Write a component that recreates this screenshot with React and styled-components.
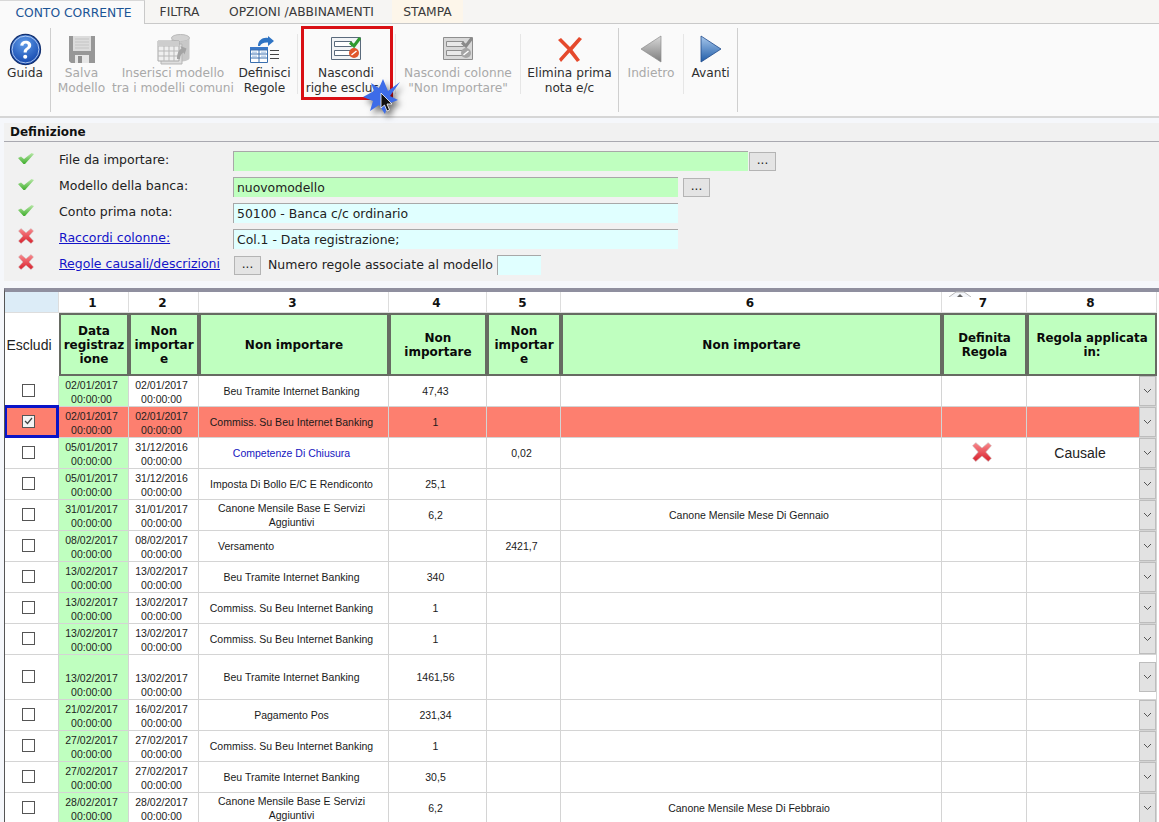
import React from 'react';
import styled, { createGlobalStyle } from 'styled-components';

const GlobalStyle = createGlobalStyle`
  html, body {
    margin: 0;
    padding: 0;
    height: 822px;
    overflow: hidden;
    background: #f5f7fb;
    font-family: "DejaVu Sans", Verdana, sans-serif;
  }
`;

const Page = styled.div`
  position: relative;
  width: 1159px;
  height: 822px;
  overflow: hidden;
`;

const TabBar = styled.div`
  display: flex;
  height: 23px;
  background: #f6f5f3;
  border-bottom: 1px solid #c9c9c9;
`;

const Tab = styled.div`
  box-sizing: border-box;
  width: ${p => p.$w}px;
  height: ${p => (p.$active ? 24 : 23)}px;
  padding-left: ${p => p.$pl || 0}px;
  padding-right: ${p => p.$pr || 0}px;
  display: flex;
  align-items: center;
  justify-content: center;
  font-size: 12.3px;
  white-space: nowrap;
  color: ${p => (p.$active ? '#1c5596' : '#3a3a3a')};
  background: ${p => (p.$active ? '#fafafa' : p.$warm ? '#fdf6ea' : 'transparent')};
  border-right: ${p => (p.$active ? '1px solid #c9c9c9' : 'none')};
  border-top: ${p => (p.$active ? '1px solid #d8d8d8' : 'none')};
`;

const Ribbon = styled.div`
  display: flex;
  height: 92px;
  background: #fafafa;
  border-bottom: 2px solid #d6d6d6;
`;

const Tool = styled.div`
  box-sizing: border-box;
  width: ${p => p.$w}px;
  padding-top: 8px;
  display: flex;
  flex-direction: column;
  align-items: center;
  font-size: 12.2px;
  line-height: 15px;
  text-align: center;
  white-space: nowrap;
  color: ${p => (p.$off ? '#a9a9a9' : '#2e2e2e')};
`;

const HotTool = styled(Tool)`
  height: 74px;
  margin-top: 2px;
  padding: 3px 2px 0 0;
  border: 3px solid #d90f14;
  justify-content: flex-start;
`;

const ToolIcon = styled.div`
  height: 34px;
  display: flex;
  align-items: center;
  justify-content: center;
`;

const TallSep = styled.div`
  width: 1px;
  height: 84px;
  margin-top: 4px;
  background: #cfcfcf;
`;

const ShortSep = styled.div`
  width: 1px;
  height: 60px;
  margin-top: 10px;
  background: #e6e6e6;
`;

const Spacer = styled.div`
  width: ${p => p.$w}px;
`;

const Panel = styled.section`
  margin: 5px 0 0 4px;
  height: 158px;
  background: #f1f1f1;
  width: 1155px;
`;

const PanelTitle = styled.h3`
  margin: 0;
  height: 19px;
  padding: 2px 0 0 6px;
  box-sizing: border-box;
  font-size: 12px;
  line-height: 15px;
  font-weight: bold;
  color: #111;
  border-bottom: 1px solid #a9a9b0;
`;

const FormRows = styled.div`
  display: flex;
  flex-direction: column;
  padding-top: 6px;
`;

const FormRow = styled.div`
  display: flex;
  align-items: center;
  height: 26px;
`;

const StatusIcon = styled.div`
  width: 55px;
  height: 26px;
  padding: 0 0 6px 14px;
  box-sizing: border-box;
  display: flex;
  align-items: center;
`;

const Label = styled.div`
  width: 174px;
  font-size: 12.5px;
  color: #222;
  margin-top: -4px;
`;

const FormLink = styled.a`
  font-size: 12.5px;
  color: #1414c8;
  text-decoration: underline;
  white-space: nowrap;
`;

const Field = styled.div`
  box-sizing: border-box;
  width: ${p => p.$w}px;
  height: 20px;
  margin-left: ${p => p.$ml || 0}px;
  padding-left: 3px;
  font-size: 12.4px;
  line-height: 20px;
  color: #222;
  background: ${p => (p.$green ? '#bfffbf' : '#e0ffff')};
  border-top: 1px solid #a8a8a8;
  border-left: 1px solid #a8a8a8;
`;

const DotsButton = styled.div`
  box-sizing: border-box;
  width: 27px;
  height: 19px;
  margin-left: ${p => p.$ml}px;
  background: #e4e4e4;
  border: 1px solid #b4b4b4;
  font-size: 12px;
  line-height: 15px;
  text-align: center;
  color: #222;
`;

const CountText = styled.span`
  margin: -2px 0 0 7px;
  font-size: 12.5px;
  color: #222;
  white-space: nowrap;
`;

const Splitter = styled.div`
  position: absolute;
  left: 949px;
  top: 282px;
  width: 22px;
  height: 6px;
`;

const Grid = styled.div`
  margin: 7px 0 0 4px;
  width: 1155px;
  height: 535px;
  overflow: hidden;
  border-top: 4px solid #8f8f9f;
  border-left: 1px solid #555;
  box-sizing: border-box;
  background: #fff;
`;

const Table = styled.table`
  table-layout: fixed;
  width: 1152px;
  border-collapse: separate;
  border-spacing: 0;
  font-family: "Liberation Sans", Arial, sans-serif;
`;

const NumCell = styled.th`
  height: 18px;
  padding: 2px 2px 0 0;
  box-sizing: content-box;
  font-family: "DejaVu Sans", sans-serif;
  font-size: 12px;
  line-height: 14px;
  font-weight: bold;
  color: #111;
  background: ${p => (p.$corner ? '#dcecf7' : '#fff')};
  border-right: 1px solid #ddd;
  border-bottom: 1px solid #ddd;
`;

const HeadCell = styled.th`
  box-sizing: border-box;
  height: 63px;
  padding: 0 ${p => p.$pad || 1}px;
  font-family: "DejaVu Sans", sans-serif;
  font-size: ${p => (p.$small ? 11.8 : 12)}px;
  line-height: 14px;
  font-weight: bold;
  color: #0a0a0a;
  background: #bfffbf;
  border: 2px solid #666b62;
  overflow-wrap: anywhere;
`;

const EscludiHead = styled.th`
  padding: 0 6px 0 0;
  font-size: 14px;
  font-weight: normal;
  color: #222;
  background: #fff;
`;

const Row = styled.tr`
  height: ${p => p.$h}px;
  background: ${p => (p.$excluded ? '#fd7f6f' : '#fff')};
`;

const Cell = styled.td`
  box-sizing: border-box;
  position: relative;
  padding: 0 4px 0 0;
  height: inherit;
  font-size: 10.5px;
  line-height: 14px;
  color: ${p => (p.$blue ? '#1616c0' : '#1a1a1a')};
  text-align: ${p => (p.$left ? 'left' : 'center')};
  padding-left: ${p => (p.$left ? 19 : 0)}px;
  border-right: 1px solid #d4d4d4;
  border-bottom: 1px solid #d4d4d4;
`;

const DateCell = styled(Cell)`
  vertical-align: bottom;
  color: #222;
  background: ${p => (p.$green ? '#bfffbf' : 'transparent')};
`;

const CheckCell = styled(Cell)`
  vertical-align: middle;
`;

const CheckBox = styled.div`
  box-sizing: border-box;
  width: 13px;
  height: 13px;
  margin: -2px 0 0 17px;
  background: ${p => (p.$on ? '#f4f4f4' : '#fff')};
  border: 1px solid #555;
  display: flex;
  align-items: center;
  justify-content: center;
`;

const FocusFrame = styled.div`
  position: absolute;
  left: -1px;
  top: -2px;
  right: -1px;
  bottom: -1px;
  border: 3px solid #0a14c8;
`;

const ComboCell = styled(Cell)`
  padding: 0;
  font-size: 14px;
  text-align: left;
  color: #222;
`;

const ComboInner = styled.div`
  display: flex;
  align-items: stretch;
  height: 30px;
`;

const ComboText = styled.div`
  flex: 1;
  text-align: center;
  line-height: 30px;
  padding-right: 6px;
`;

const ComboButton = styled.div`
  box-sizing: border-box;
  flex: 0 0 17px;
  height: 30px;
  background: #e2e2e2;
  border: 1px solid #bdbdbd;
  display: flex;
  align-items: center;
  justify-content: center;
`;

const Pointer = styled.svg`
  position: absolute;
  left: 358px;
  top: 76px;
  filter: drop-shadow(3px 4px 3px rgba(0, 0, 0, 0.55));
`;

const Guida = () => (
  <svg width="33" height="33" viewBox="0 0 34 34">
    <defs>
      <radialGradient id="gq" cx="45%" cy="30%" r="75%">
        <stop offset="0" stopColor="#5f9be8" />
        <stop offset="1" stopColor="#0c3fa8" />
      </radialGradient>
    </defs>
    <circle cx="17" cy="17" r="15.5" fill="url(#gq)" stroke="#14306e" strokeWidth="1.2" />
    <circle cx="17" cy="17" r="13.8" fill="none" stroke="#cfe0fa" strokeWidth="1" opacity=".8" />
    <path d="M11.5 13c.3-3.4 2.7-5 5.8-5 3.300 0 5.600 1.900 5.600 4.700 0 2.200-1.300 3.300-2.800 4.400-1.300 1-1.800 1.600-1.800 3.100h-3.200c-.1-2.400.7-3.500 2.300-4.700 1.200-.9 2-1.500 2-2.700 0-1.200-.8-2-2.100-2-1.400 0-2.300.9-2.500 2.400z" fill="#fff" />
    <circle cx="16.700" cy="24.500" r="2.100" fill="#fff" />
  </svg>
);

const Floppy = () => (
  <svg width="26" height="27" viewBox="0 0 26 27">
    <path d="M0 0h26v27H2l-2-2z" fill="#979797" />
    <path d="M4 0h18v15H4z" fill="#dcdcdc" />
    <path d="M6 3h14M6 6h14M6 9h14M6 12h14" stroke="#c4c4c4" fill="none" />
    <path d="M6 19h14v8H6z" fill="#e6e6e6" />
    <path d="M9 20h4v7H9z" fill="#8f8f8f" />
  </svg>
);

const TableDb = () => (
  <svg width="33" height="31" viewBox="0 0 33 31">
    <ellipse cx="23.500" cy="4" rx="9" ry="3.500" fill="#d2d2d2" stroke="#b9b9b9" />
    <path d="M14.500 4v20c0 2 4 3.500 9 3.500s9-1.500 9-3.500V4c0 2-4 3.500-9 3.500s-9-1.500-9-3.500z" fill="#c8c8c8" />
    <path d="M4 10h21v20H4z" fill="#dedede" stroke="#b5b5b5" />
    <path d="M1 7h21v20H1z" fill="#efefef" stroke="#a9a9a9" />
    <path d="M1 12h21M1 17h21M1 22h21M7 7v20M12 7v20M17 7v20" stroke="#b9b9b9" fill="none" />
    <path d="M1 7h21v5H1z" fill="#cdcdcd" />
    <path d="M20 25c0-5 1.500-9 4.500-10.500l-1-2.500 6 2.500-2 6-1-2c-2 1-3.500 3.500-3.500 6.500z" fill="#a4a4a4" />
  </svg>
);

const Rules = () => (
  <svg width="29" height="27" viewBox="0 0 29 27">
    <path d="M8 10c0-6 5-9 10-8V0l6 5-6 5V6.500c-4-.5-7 1-8 3.500z" fill="#2f74c4" />
    <path d="M0 11h18v3H0z" fill="#3a78c8" />
    <path d="M.5 14h17v12.500H.5z" fill="#fff" stroke="#3a6fae" />
    <path d="M.5 18h17M.5 22h17M9 14v12.500" stroke="#3a6fae" fill="none" />
    <path d="M2 15.500h5v1.500H2zM11 15.500h5v1.500h-5zM2 19.500h5v1.500H2zM11 19.500h5v1.500h-5z" fill="#bcd2ec" />
    <path d="M20 14.500h9M20 18.500h9M20 22.500h9" stroke="#444" strokeWidth="1.200" />
  </svg>
);

const HideRows = ({ off }) => {
  const line = off ? '#8e8e8e' : '#5a6a7c';
  return (
    <svg width="30" height="24" viewBox="0 0 30 24">
      <path d="M.5 .5h29v22H.5z" fill={off ? '#d8d8d8' : '#f2f4f6'} stroke={line} />
      <path d="M3.500 4.500h17v5h-17zM3.500 13.500h17v5h-17z" fill={off ? '#e8e8e8' : '#fff'} stroke={line} />
      <path d="M19 5.500l4 3.500 6-8" fill="none" stroke={off ? '#8a8a8a' : '#2f9a2f'} strokeWidth="3" />
      <circle cx="23" cy="16" r="5" fill={off ? '#a5a5a5' : '#e0562c'} />
      <path d="M20.500 18l5-4" stroke="#fff" strokeWidth="1.500" />
    </svg>
  );
};

const BigX = () => (
  <svg width="24" height="25" viewBox="0 0 24 25">
    <path d="M3 1l9 9 9-10 3 2-9.500 11L22 23l-3 2-7.500-9.500L3 25l-2-3 8.500-9.500L0 3z" fill="#e5492c" />
  </svg>
);

const LeftArrow = () => (
  <svg width="22" height="28" viewBox="0 0 22 28">
    <defs>
      <linearGradient id="la" x1="0" y1="0" x2="0" y2="1">
        <stop offset="0" stopColor="#d8d8d8" />
        <stop offset="1" stopColor="#7d7d7d" />
      </linearGradient>
    </defs>
    <path d="M21 1v26L1 14z" fill="url(#la)" stroke="#8d8d8d" strokeWidth=".7" />
  </svg>
);

const RightArrow = () => (
  <svg width="22" height="28" viewBox="0 0 22 28">
    <defs>
      <linearGradient id="ra" x1="0" y1="0" x2="0" y2="1">
        <stop offset="0" stopColor="#a8c8ec" />
        <stop offset="1" stopColor="#1f5ca8" />
      </linearGradient>
    </defs>
    <path d="M1 1v26l20-13z" fill="url(#ra)" stroke="#1f4a8a" strokeWidth=".8" />
  </svg>
);

const Check = () => (
  <svg width="16" height="11" viewBox="0 0 16 11">
    <defs>
      <linearGradient id="ck" x1="0" y1="0" x2="0" y2="1">
        <stop offset="0" stopColor="#b8e8a8" />
        <stop offset="1" stopColor="#3fae2c" />
      </linearGradient>
    </defs>
    <path d="M0 5l3-1.500 3 2.500 7.500-6L16 1 7 11H5.500z" fill="url(#ck)" />
  </svg>
);

const Cross = ({ size = 16 }) => (
  <svg width={size} height={size} viewBox="0 0 16 16">
    <defs>
      <linearGradient id="cr" x1="0" y1="0" x2="0" y2="1">
        <stop offset="0" stopColor="#fa8a8e" />
        <stop offset="1" stopColor="#d8202c" />
      </linearGradient>
    </defs>
    <path d="M3 .5L8 4.800 13 .5 15.500 3 11 8l4.500 5L13 15.500 8 11.200 3 15.500.5 13 5 8 .5 3z" fill="url(#cr)" stroke="#c9b9b9" strokeWidth=".5" />
  </svg>
);

const Chevron = () => (
  <svg width="9" height="6" viewBox="0 0 9 6">
    <path d="M1 1l3.500 3.500L8 1" fill="none" stroke="#555" strokeWidth="1" />
  </svg>
);

const rows = [
  { d1: '02/01/2017', d2: '02/01/2017', desc: 'Beu Tramite Internet Banking', a: '47,43' },
  { d1: '02/01/2017', d2: '02/01/2017', desc: 'Commiss. Su Beu Internet Banking', a: '1', excluded: true },
  { d1: '05/01/2017', d2: '31/12/2016', desc: 'Competenze Di Chiusura', b: '0,02', blue: true, rule: true, applied: 'Causale' },
  { d1: '05/01/2017', d2: '31/12/2016', desc: 'Imposta Di Bollo E/C E Rendiconto', a: '25,1' },
  { d1: '31/01/2017', d2: '31/01/2017', desc: 'Canone Mensile Base E Servizi Aggiuntivi', a: '6,2', note: 'Canone Mensile Mese Di Gennaio' },
  { d1: '08/02/2017', d2: '08/02/2017', desc: 'Versamento', b: '2421,7', left: true },
  { d1: '13/02/2017', d2: '13/02/2017', desc: 'Beu Tramite Internet Banking', a: '340' },
  { d1: '13/02/2017', d2: '13/02/2017', desc: 'Commiss. Su Beu Internet Banking', a: '1' },
  { d1: '13/02/2017', d2: '13/02/2017', desc: 'Commiss. Su Beu Internet Banking', a: '1' },
  { d1: '13/02/2017', d2: '13/02/2017', desc: 'Beu Tramite Internet Banking', a: '1461,56', h: 45 },
  { d1: '21/02/2017', d2: '16/02/2017', desc: 'Pagamento Pos', a: '231,34' },
  { d1: '27/02/2017', d2: '27/02/2017', desc: 'Commiss. Su Beu Internet Banking', a: '1' },
  { d1: '27/02/2017', d2: '27/02/2017', desc: 'Beu Tramite Internet Banking', a: '30,5' },
  { d1: '28/02/2017', d2: '28/02/2017', desc: 'Canone Mensile Base E Servizi Aggiuntivi', a: '6,2', note: 'Canone Mensile Mese Di Febbraio' },
];

const widths = [54, 70, 70, 190, 98, 74, 381, 85, 130];
const heads = [
  { text: 'Data registrazione' },
  { text: 'Non importare' },
  { text: 'Non importare' },
  { text: 'Non importare' },
  { text: 'Non importare', pad: 4 },
  { text: 'Non importare' },
];

export default function App() {
  return (
    <Page>
      <GlobalStyle />
      <TabBar>
        <Tab $w={145} $active $pl={3}>CONTO CORRENTE</Tab>
        <Tab $w={69}>FILTRA</Tab>
        <Tab $w={178} $pr={3}>OPZIONI /ABBINAMENTI</Tab>
        <Tab $w={71} $warm>STAMPA</Tab>
      </TabBar>

      <Ribbon>
        <Tool $w={50}><ToolIcon><Guida /></ToolIcon>Guida</Tool>
        <TallSep />
        <Tool $w={61} $off><ToolIcon><Floppy /></ToolIcon>Salva<br />Modello</Tool>
        <Tool $w={122} $off><ToolIcon><TableDb /></ToolIcon>Inserisci modello<br />tra i modelli comuni</Tool>
        <Tool $w={61}><ToolIcon><Rules /></ToolIcon>Definisci<br />Regole</Tool>
        <Spacer $w={2} />
        <ShortSep />
        <Spacer $w={3} />
        <HotTool $w={92}><ToolIcon><HideRows /></ToolIcon>Nascondi<br />righe escluse</HotTool>
        <Spacer $w={2} />
        <ShortSep />
        <Tool $w={124} $off><ToolIcon><HideRows off /></ToolIcon>Nascondi colonne<br />"Non Importare"</Tool>
        <ShortSep />
        <Tool $w={97}><ToolIcon><BigX /></ToolIcon>Elimina prima<br />nota e/c</Tool>
        <TallSep />
        <Tool $w={64} $off><ToolIcon><LeftArrow /></ToolIcon>Indietro</Tool>
        <ShortSep />
        <Tool $w={53}><ToolIcon><RightArrow /></ToolIcon>Avanti</Tool>
        <TallSep />
      </Ribbon>

      <Panel>
        <PanelTitle>Definizione</PanelTitle>
        <FormRows>
          <FormRow>
            <StatusIcon><Check /></StatusIcon>
            <Label>File da importare:</Label>
            <Field $w={515} $green />
            <DotsButton $ml={1}>...</DotsButton>
          </FormRow>
          <FormRow>
            <StatusIcon><Check /></StatusIcon>
            <Label>Modello della banca:</Label>
            <Field $w={445} $green>nuovomodello</Field>
            <DotsButton $ml={5}>...</DotsButton>
          </FormRow>
          <FormRow>
            <StatusIcon><Check /></StatusIcon>
            <Label>Conto prima nota:</Label>
            <Field $w={445}>50100 - Banca c/c ordinario</Field>
          </FormRow>
          <FormRow>
            <StatusIcon><Cross /></StatusIcon>
            <Label><FormLink href="#">Raccordi colonne:</FormLink></Label>
            <Field $w={445}>Col.1 - Data registrazione;</Field>
          </FormRow>
          <FormRow>
            <StatusIcon><Cross /></StatusIcon>
            <Label><FormLink href="#">Regole causali/descrizioni</FormLink></Label>
            <DotsButton $ml={1}>...</DotsButton>
            <CountText>Numero regole associate al modello</CountText>
            <Field $w={44} $ml={4} />
          </FormRow>
        </FormRows>
      </Panel>

      <Splitter>
        <svg width="22" height="6" viewBox="0 0 22 6">
          <path d="M0 6L7 1h8l7 5" fill="#f5f7fb" stroke="#b8b8b8" />
          <path d="M8 6l3-3 3 3z" fill="#666" />
        </svg>
      </Splitter>

      <Grid>
        <Table>
          <colgroup>
            {widths.map((w, i) => <col key={i} style={{ width: w }} />)}
          </colgroup>
          <thead>
            <tr>
              <NumCell $corner />
              {[1, 2, 3, 4, 5, 6, 7, 8].map(n => <NumCell key={n}>{n}</NumCell>)}
            </tr>
            <tr>
              <EscludiHead>Escludi</EscludiHead>
              {heads.map((h, i) => <HeadCell key={i} $pad={h.pad}>{h.text}</HeadCell>)}
              <HeadCell $small>Definita<br />Regola</HeadCell>
              <HeadCell $small>Regola applicata in:</HeadCell>
            </tr>
          </thead>
          <tbody>
            {rows.map((r, i) => (
              <Row key={i} $h={r.h || 31} $excluded={r.excluded}>
                <CheckCell>
                  <CheckBox $on={r.excluded}>
                    {r.excluded && (
                      <svg width="9" height="8" viewBox="0 0 9 8">
                        <path d="M1 4l2.500 2.500L8 1" fill="none" stroke="#444" strokeWidth="1.200" />
                      </svg>
                    )}
                  </CheckBox>
                  {r.excluded && <FocusFrame />}
                </CheckCell>
                <DateCell $green={!r.excluded}>{r.d1}<br />00:00:00</DateCell>
                <DateCell>{r.d2}<br />00:00:00</DateCell>
                <Cell $blue={r.blue} $left={r.left}>{r.desc}</Cell>
                <Cell>{r.a}</Cell>
                <Cell>{r.b}</Cell>
                <Cell>{r.note}</Cell>
                <Cell>{r.rule && <Cross size={20} />}</Cell>
                <ComboCell>
                  <ComboInner>
                    <ComboText>{r.applied}</ComboText>
                    <ComboButton><Chevron /></ComboButton>
                  </ComboInner>
                </ComboCell>
              </Row>
            ))}
          </tbody>
        </Table>
      </Grid>

      <Pointer width="46" height="44" viewBox="0 0 46 44">
        <path d="M42 6L30 15 25 3l-4 9-8-5 3 8-11 6 10 4-3 10 9-6 6 9 3-10 10-4-8-4z" fill="#3d6ce8" />
        <path d="M23 17v15l3.500-3 2.500 6 2.500-1-2.500-6h5z" fill="#111" stroke="#fff" strokeWidth=".8" />
      </Pointer>
    </Page>
  );
}
